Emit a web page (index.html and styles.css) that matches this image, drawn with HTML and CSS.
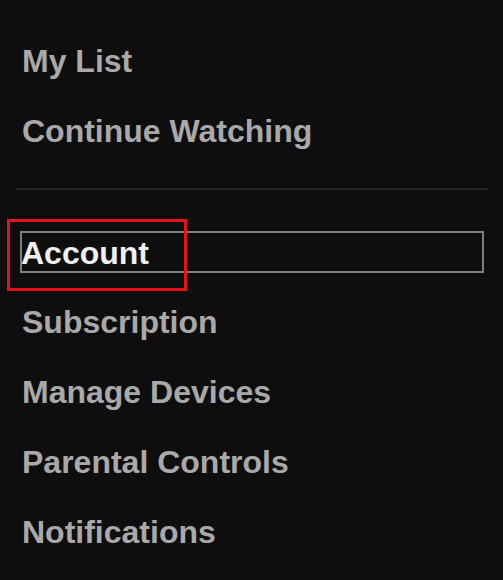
FILE: index.html
```html
<!DOCTYPE html>
<html lang="en">
<head>
  <meta charset="UTF-8">
  <title>Menu</title>
  <link rel="stylesheet" href="styles.css">
</head>
<body>

  <nav class="side-menu">
    <ul class="menu-group">
      <li class="menu-item">My List</li>
      <li class="menu-item">Continue Watching</li>
    </ul>

    <hr class="menu-divider">

    <ul class="menu-group">
      <li class="menu-item active">
        <span class="focus-box"><span class="focus-label">Account</span></span>
        <span class="highlight"></span>
      </li>
      <li class="menu-item">Subscription</li>
      <li class="menu-item">Manage Devices</li>
      <li class="menu-item">Parental Controls</li>
      <li class="menu-item">Notifications</li>
    </ul>
  </nav>

</body>
</html>
```

FILE: styles.css
```css
body {
  margin: 0;
  background-color: #0e0e0f;
  font-family: "Liberation Sans", Arial, sans-serif;
  height: 580px;
  overflow: hidden;
}

.side-menu {
  padding: 26px 0 0 0;
}

.menu-group {
  list-style: none;
  margin: 0;
  padding: 0;
}

.menu-item {
  position: relative;
  height: 70px;
  display: flex;
  align-items: center;
  padding-left: 22px;
  font-size: 32px;
  font-weight: bold;
  color: #a9a9a9;
}

.menu-divider {
  border: none;
  height: 2px;
  background-color: #232324;
  margin: 22px 15px 27px 16px;
}

/* Selected row */
.active {
  color: #f0f0f0;
  padding-left: 20px;
}

.focus-box {
  display: flex;
  align-items: center;
  box-sizing: border-box;
  width: 464px;
  height: 42px;
  border: 2px solid #808080;
  line-height: 1;
}

.focus-label {
  margin-left: -1px;
  padding-top: 1px;
}

/* Red annotation frame */
.highlight {
  position: absolute;
  left: 7px;
  top: 2px;
  width: 180px;
  height: 72px;
  box-sizing: border-box;
  border: 3px solid #e0141c;
}
```
